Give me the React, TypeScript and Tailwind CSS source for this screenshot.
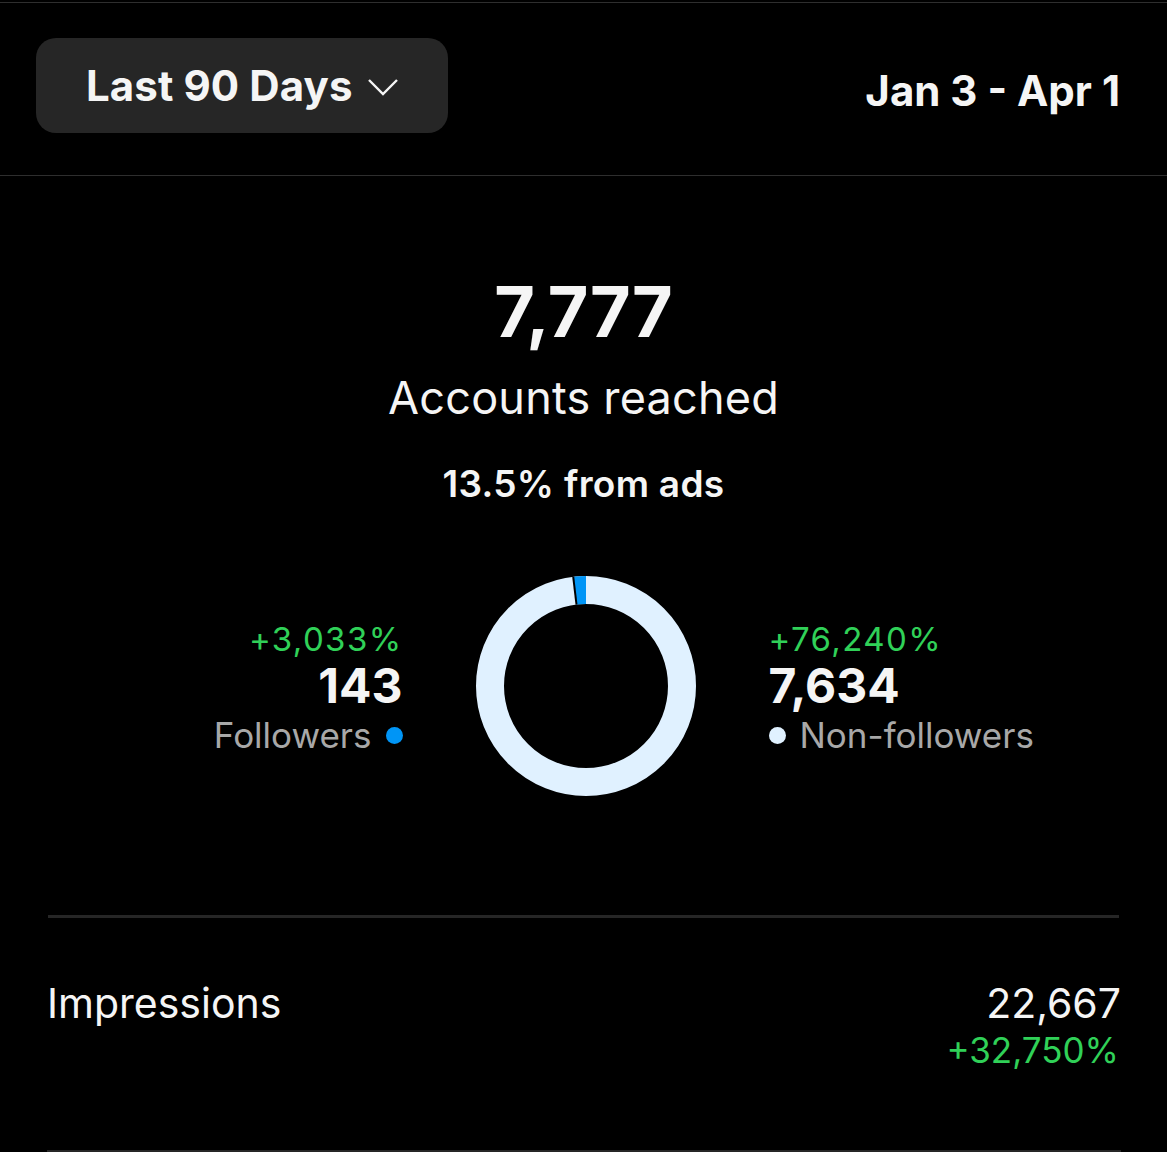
import React from "react";

const font = { fontFamily: "Inter, 'Liberation Sans', sans-serif" };

interface SplitStatProps {
  change: string;
  value: string;
  label: string;
  dotColor: string;
  align: "left" | "right";
}

const SplitStat: React.FC<SplitStatProps> = ({ change, value, label, dotColor, align }) => {
  const right = align === "right";
  return (
    <div className={`flex flex-col pt-[4px] ${right ? "items-end text-right" : "items-start text-left"}`}>
      <div className="text-[33px] leading-[42px] tracking-[1.4px] text-[#30d158]">{change}</div>
      <div className="text-[48px] leading-[52px] font-bold text-[#f5f5f5]">{value}</div>
      <div className="flex items-center gap-[14px] text-[35px] leading-[46px] text-[#a8a8a8]">
        {right ? (
          <>
            <span>{label}</span>
            <span className={`w-[17px] h-[17px] rounded-full ${dotColor}`} />
          </>
        ) : (
          <>
            <span className={`w-[17px] h-[17px] rounded-full ${dotColor}`} />
            <span>{label}</span>
          </>
        )}
      </div>
    </div>
  );
};

const Donut: React.FC = () => (
  <svg width="220" height="220" viewBox="0 0 220 220">
    <circle cx="110" cy="110" r="96" fill="none" stroke="#e0f1ff" strokeWidth="28" />
    <path
      d="M110 0 A110 110 0 0 0 97.36 0.73 L100.58 28.54 A82 82 0 0 1 110 28 Z"
      fill="#0095f6"
    />
    <line x1="97.2" y1="0.6" x2="100.5" y2="28.6" stroke="#000" strokeWidth="2" />
  </svg>
);

export default function App() {
  return (
    <div className="w-full h-[1152px] bg-black text-white overflow-hidden pt-[2px]" style={font}>
      <div className="border-t border-[#2e2e2e]" />

      <header className="flex items-center justify-between pl-[36px] pr-[47px] pt-[35px] pb-[42px] border-b border-[#2e2e2e]">
        <button className="flex items-center gap-[14px] h-[95px] w-[412px] rounded-[20px] bg-[#262626] pl-[50px]">
          <span className="text-[42px] font-bold text-[#f5f5f5] tracking-[0.1px]">Last 90 Days</span>
          <svg width="32" height="18" viewBox="0 0 32 18" className="mt-[2px]">
            <polyline points="2,2 16,16 30,2" fill="none" stroke="#f5f5f5" strokeWidth="2.4" />
          </svg>
        </button>
        <div className="text-[42px] font-bold text-[#f5f5f5] mt-[10px]">Jan 3 - Apr 1</div>
      </header>

      <section className="flex flex-col items-center pt-[96px]">
        <div className="text-[70px] leading-[80px] font-bold text-[#f5f5f5]">7,777</div>
        <div className="text-[45px] leading-[60px] mt-[16px] text-[#f5f5f5] tracking-[0.2px]">Accounts reached</div>
        <div className="text-[37px] leading-[44px] font-semibold mt-[34px] text-[#f5f5f5] tracking-[0.3px]">13.5% from ads</div>
      </section>

      <section className="grid grid-cols-[1fr_auto_1fr] gap-x-[73px] items-center mt-[70px] pl-[4px]">
        <SplitStat change="+3,033%" value="143" label="Followers" dotColor="bg-[#0095f6]" align="right" />
        <Donut />
        <SplitStat change="+76,240%" value="7,634" label="Non-followers" dotColor="bg-[#e0f1ff]" align="left" />
      </section>

      <div className="mx-[48px] mt-[119px] border-t-[3px] border-[#262626]" />

      <section className="flex justify-between items-start ml-[47px] mr-[46px] pt-[59px] pb-[79px] border-b-[3px] border-[#262626]">
        <div className="text-[41px] leading-[52px] text-[#f5f5f5]">Impressions</div>
        <div className="flex flex-col items-end">
          <div className="text-[41px] leading-[52px] text-[#f5f5f5]">22,667</div>
          <div className="text-[35px] leading-[42px] text-[#30d158] mr-[2px]">+32,750%</div>
        </div>
      </section>
    </div>
  );
}
